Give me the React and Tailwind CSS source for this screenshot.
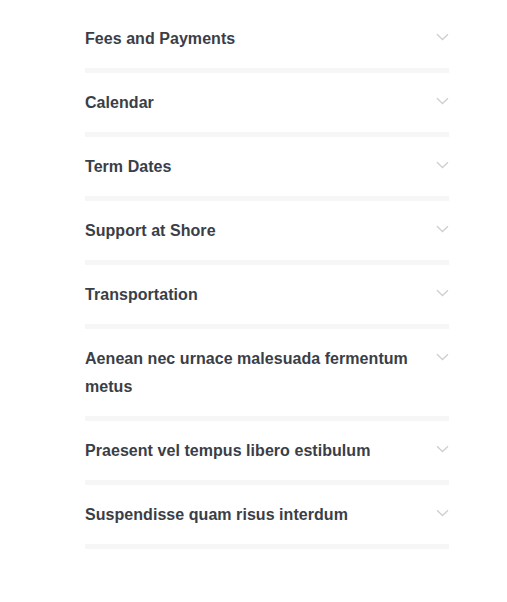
import React from "react";

const items = [
  "Fees and Payments",
  "Calendar",
  "Term Dates",
  "Support at Shore",
  "Transportation",
  "Aenean nec urnace malesuada fermentum metus",
  "Praesent vel tempus libero estibulum",
  "Suspendisse quam risus interdum",
];

function Chevron() {
  return (
    <svg width="13" height="8" viewBox="0 0 13 8" className="shrink-0 mt-[8px]" fill="none">
      <path d="M1 1.2 L6.5 6.5 L12 1.2" stroke="#cfcfcf" strokeWidth="1.3" />
    </svg>
  );
}

export default function App() {
  return (
    <div className="min-h-[602px] bg-white pt-[9px]" style={{ fontFamily: '"Liberation Sans", Arial, sans-serif' }}>
      <div className="w-[364px] ml-[85px]">
        {items.map((t) => (
          <div key={t}>
            <div className="flex justify-between items-start pt-[16px] pb-[15px]">
              <span className="text-[16px] leading-[28px] font-bold tracking-[0.05px] text-[#3a3e47] pr-[18px]">{t}</span>
              <Chevron />
            </div>
            <div className="h-[5px] bg-[#f6f6f6]" />
          </div>
        ))}
      </div>
    </div>
  );
}
